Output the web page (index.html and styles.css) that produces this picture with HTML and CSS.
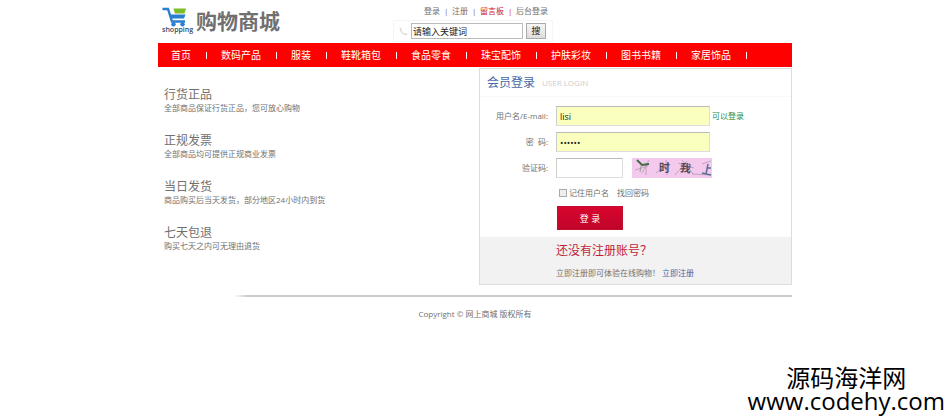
FILE: index.html
```html
<!DOCTYPE html>
<html lang="zh-CN">
<head>
    <meta charset="UTF-8">
    <meta name="viewport" content="width=device-width, initial-scale=1.0">
    <title>购物商城 - 会员登录</title>
    <link rel="stylesheet" href="styles.css">
</head>
<body>
    <div class="container">
        <header class="header">
            <a href="#" class="logo">
                <svg class="logo-cart" viewBox="0 0 32 30" aria-hidden="true">
                    <path d="M0.500 3H6L10 15.500H23" fill="none" stroke="#2a7fd0" stroke-width="2.400"/>
                    <path d="M11.500 2.500H24L22.500 7.500H13Z" fill="#7cbd28"/>
                    <path d="M8 8.500H23.500L22 12.500H9.500Z" fill="#2a7fd0"/>
                    <circle cx="11.500" cy="18.300" r="2.200" fill="#2a7fd0"/>
                    <circle cx="20.500" cy="18.300" r="2.200" fill="#2a7fd0"/>
                    <text x="0" y="26" class="logo-word">shopping</text>
                </svg>
                <span class="logo-name">购物商城</span>
            </a>
            <div class="header-tools">
                <div class="top-links">
                    <a href="#">登录</a><span>|</span><a href="#">注册</a><span>|</span><a href="#" class="hot">留言板</a><span class="hot">|</span><a href="#">后台登录</a>
                </div>
                <form class="search">
                    <svg class="search-phone" viewBox="0 0 10 10" aria-hidden="true">
                        <path d="M1.500 1.500C1.500 5.500 4.500 8.500 8.500 8.500" fill="none" stroke="#ddd" stroke-width="1.500"/>
                        <path d="M1 1L3 3M7 7L9 9" stroke="#ddd" stroke-width="1.500"/>
                    </svg>
                    <input type="text" class="search-input" value="请输入关键词" aria-label="搜索">
                    <button type="button" class="search-btn">搜</button>
                </form>
            </div>
        </header>

        <nav class="nav">
            <a href="#">首页</a>
            <a href="#">数码产品</a>
            <a href="#">服装</a>
            <a href="#">鞋靴箱包</a>
            <a href="#">食品零食</a>
            <a href="#">珠宝配饰</a>
            <a href="#">护肤彩妆</a>
            <a href="#">图书书籍</a>
            <a href="#">家居饰品</a>
        </nav>

        <main class="main">
            <section class="promises">
                <div class="promise">
                    <h3>行货正品</h3>
                    <p>全部商品保证行货正品，您可放心购物</p>
                </div>
                <div class="promise">
                    <h3>正规发票</h3>
                    <p>全部商品均可提供正规商业发票</p>
                </div>
                <div class="promise">
                    <h3>当日发货</h3>
                    <p>商品购买后当天发货，部分地区24小时内到货</p>
                </div>
                <div class="promise">
                    <h3>七天包退</h3>
                    <p>购买七天之内可无理由退货</p>
                </div>
            </section>

            <section class="login">
                <div class="login-title">
                    <h2>会员登录</h2>
                    <span>USER LOGIN</span>
                </div>
                <form class="login-form">
                    <div class="row">
                        <label for="username">用户名/E-mail:</label>
                        <input type="text" id="username" class="field filled" value="lisi">
                        <span class="ok">可以登录</span>
                    </div>
                    <div class="row">
                        <label for="password">密&nbsp;&nbsp;码:</label>
                        <input type="password" id="password" class="field filled" value="123456">
                    </div>
                    <div class="row">
                        <label for="captcha">验证码:</label>
                        <input type="text" id="captcha" class="field short">
                        <svg class="captcha" viewBox="0 0 80 20" role="img" aria-label="验证码">
                            <rect width="80" height="20" fill="#f3c9ee"/>
                            <g fill="none" stroke="#b59ab4" stroke-width="0.800">
                                <path d="M3 12L16 8M10 15L17 2M14 17V5M24 15L36 5M34 2L35 17M43 17L55 3M50 2L62 17M46 5L62 10M60 16L79 17M70 6L79 3"/>
                            </g>
                            <path d="M5 2L10 7L17 6" fill="none" stroke="#3d6a40" stroke-width="1.800"/>
                            <path d="M9 8L8 14" stroke="#999" fill="none"/>
                            <text x="27" y="14" class="captcha-char">时</text>
                            <text x="48" y="14" class="captcha-char" transform="rotate(8 53 10)">我</text>
                            <path d="M76 6L74 16M75 10L79 10M70 15L79 17" fill="none" stroke="#5c6f96" stroke-width="1.500"/>
                        </svg>
                    </div>
                    <div class="options">
                        <input type="checkbox" id="remember">
                        <label for="remember">记住用户名</label>
                        <a href="#">找回密码</a>
                    </div>
                    <button type="button" class="login-btn">登 录</button>
                </form>
                <div class="register">
                    <h2>还没有注册账号？</h2>
                    <p>立即注册即可体验在线购物！ <a href="#">立即注册</a></p>
                </div>
            </section>
        </main>

        <footer class="footer">Copyright © 网上商城 版权所有</footer>
    </div>

    <div class="watermark">
        <div>源码海洋网</div>
        <div>www.codehy.com</div>
    </div>
</body>
</html>
```
FILE: styles.css
```css
* {
    box-sizing: border-box;
}
body {
    margin: 0;
    background: #fff;
    color: #707070;
    font-family: "Open Sans", "Noto Sans CJK SC", sans-serif;
    font-size: 8px;
    line-height: 12px;
}
h2, h3, p {
    margin: 0;
    font-weight: normal;
}
a {
    color: inherit;
    text-decoration: none;
}
input, button {
    font-family: inherit;
    margin: 0;
}
.container {
    max-width: 634px;
    margin: 0 auto;
}

/* header */
.header {
    display: grid;
    grid-template-columns: 1fr auto 1fr;
    height: 43px;
    padding-right: 4px;
}
.logo {
    display: flex;
    align-items: flex-start;
    gap: 2px;
    padding: 6px 0 0 4px;
}
.logo-cart {
    width: 32px;
    height: 30px;
}
.logo-word {
    font-family: "Open Sans", sans-serif;
    font-size: 7px;
    font-weight: 600;
    fill: #34476b;
}
.logo-name {
    font-size: 21px;
    line-height: 30px;
    font-weight: bold;
    color: #707070;
}
.top-links {
    display: flex;
    justify-content: center;
    gap: 4px;
    padding: 5px 0 3px 26px;
}
.top-links span {
    width: 4px;
    text-align: center;
}
.hot {
    color: #c22;
}
.search {
    display: flex;
    align-items: center;
    gap: 3px;
    height: 22px;
    padding: 0 6px 0 5px;
    border: 1px solid #f5f5f5;
}
.search-phone {
    width: 9px;
    height: 9px;
}
.search-input {
    width: 112px;
    height: 16px;
    padding: 0 1px;
    border: 1px solid #bbb;
    color: #222;
    font-size: 9px;
}
.search-btn {
    width: 20px;
    height: 16px;
    padding: 0;
    border: 1px solid #aaa;
    background: linear-gradient(#f6f6f6, #ddd);
    color: #222;
    font-size: 9px;
    line-height: 14px;
}

/* navigation */
.nav {
    display: flex;
    height: 24px;
    padding-left: 13px;
    background: #f00;
    color: #fff;
    font-size: 10px;
    line-height: 24px;
}
.nav a {
    display: flex;
    align-items: center;
    white-space: nowrap;
}
.nav a::after {
    content: "";
    width: 1px;
    height: 7px;
    margin: 0 14px 0 15px;
    background: #fff;
}

/* main area */
.main {
    display: grid;
    grid-template-columns: 321px 1fr;
    padding: 1px 0 10px;
}
.promises {
    display: flex;
    flex-direction: column;
    gap: 20px;
    padding: 19px 0 0 6px;
}
.promise h3 {
    font-size: 12px;
    line-height: 16px;
}
.promise p {
    line-height: 10px;
}

/* login panel */
.login {
    border: 1px solid #ddd;
}
.login-title {
    display: flex;
    align-items: center;
    gap: 7px;
    padding: 6px 7px 5px;
    border-bottom: 1px solid #f8f8f8;
}
.login-title h2 {
    color: #4568a8;
    font-size: 12px;
    line-height: 16px;
}
.login-title span {
    color: #ccc;
}
.login-form {
    padding: 9px 0 7px;
}
.row {
    display: flex;
    align-items: center;
    margin-bottom: 6px;
}
.row label {
    width: 68px;
    margin-right: 8px;
    text-align: right;
}
.field {
    width: 154px;
    height: 20px;
    padding: 0 3px;
    border: 1px solid #ddd;
    border-top-color: #bbb;
    border-left-color: #ccc;
    color: #222;
    font-size: 9px;
}
.filled {
    background: #faffbd;
}
.short {
    width: 67px;
}
.ok {
    margin-left: 2px;
    color: #2c8c3c;
}
.captcha {
    width: 80px;
    height: 20px;
    margin-left: 9px;
}
.captcha-char {
    font-family: "Noto Sans CJK SC", sans-serif;
    font-size: 11px;
    font-weight: bold;
    fill: #554a58;
}
.options {
    display: flex;
    align-items: center;
    height: 12px;
    margin: 9px 0 7px 79px;
}
.options input {
    appearance: none;
    width: 8px;
    height: 8px;
    margin-right: 2px;
    border: 1px solid #aaa;
    background: #eee;
}
.options input:checked {
    background: #4568a8;
}
.options a {
    margin-left: 8px;
}
.login-btn {
    display: block;
    width: 66px;
    height: 24px;
    margin-left: 77px;
    padding: 0;
    border: 1px solid #c01030;
    background: linear-gradient(#d8062f, #c00428);
    color: #fff;
    font-size: 9px;
}
.register {
    padding: 6px 0 5px 76px;
    background: #f2f2f2;
}
.register h2 {
    margin-bottom: 8px;
    color: #c01f3c;
    font-size: 12px;
    line-height: 16px;
}
.register a {
    color: #3b64a8;
}

/* footer */
.footer {
    padding-top: 13px;
    background: linear-gradient(to right, transparent 12%, #ccc 14%) top / 100% 2px no-repeat;
    text-align: center;
}

.watermark {
    position: absolute;
    right: 5px;
    bottom: 8px;
    color: #000;
    font-size: 24px;
    line-height: 23px;
    text-align: center;
}
```
